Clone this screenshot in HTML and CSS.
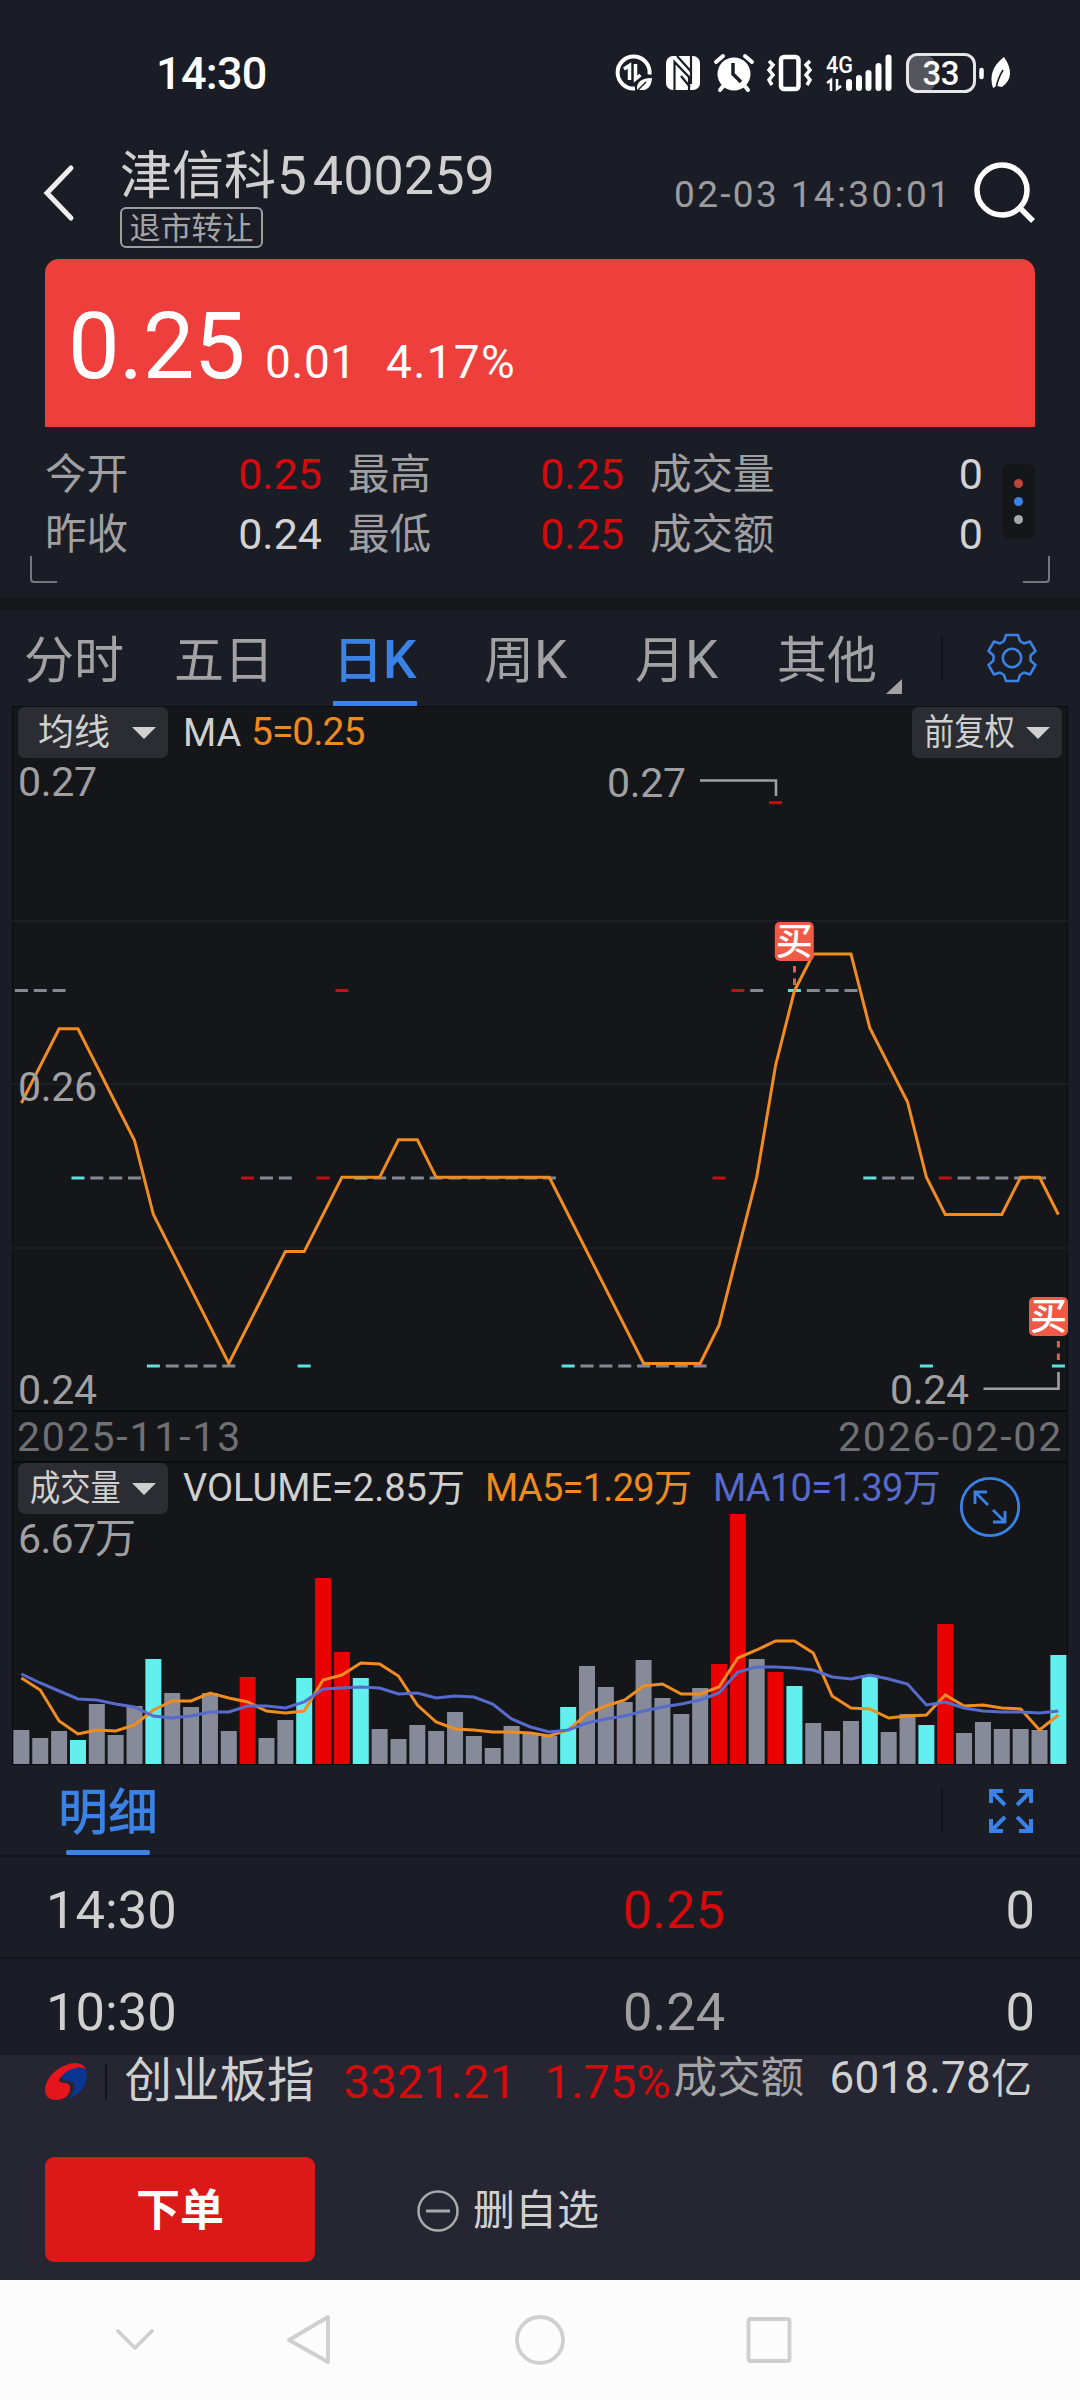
FILE: index.html
```html
<!DOCTYPE html>
<html lang="zh-CN">
<head>
<meta charset="utf-8">
<title>津信科5 400259</title>
<link rel="stylesheet" href="styles.css">
</head>
<body>
<div class="app">
  <div class="status">
    <span class="clock">14:30</span>
    <svg class="status-icons" viewBox="610 45 410 55" width="410" height="55">
      <g fill="none" stroke="#fff" stroke-width="4">
        <path d="M635 88.500A16 16 0 1 1 649.500 74.500"/>
        <path d="M624 69L629.500 65.500V80M635.500 64V79L640.500 75" stroke-width="3.500"/>
      </g>
      <path d="M637 90Q636 78 652 78Q651 91 641 90Z" fill="#fff"/>
      <path d="M637 91L646 82" stroke="#1b1d26" stroke-width="1.500"/>
      <rect x="666" y="56" width="34" height="34" rx="7" fill="#fff"/>
      <path d="M674.500 90V62L689 77V90M677 56L691 71.500M691 84V56M681 76L690 87" fill="none" stroke="#1b1d26" stroke-width="2.200"/>
      <circle cx="734" cy="74" r="16.500" fill="#fff"/>
      <path d="M716 62L723 56M745 56L752 62M720 90L724 85M744 85L748 90" stroke="#fff" stroke-width="4" stroke-linecap="round"/>
      <path d="M733 63V74L741 82" fill="none" stroke="#1b1d26" stroke-width="3.500"/>
      <g fill="none" stroke="#fff">
        <rect x="781" y="57" width="17.500" height="32" rx="3" stroke-width="4.500"/>
        <path d="M769 61L773 65L769 70L773 75L769 80L772 85M810 61L806 65L810 70L806 75L810 80L807 85" stroke-width="3.500"/>
        <path d="M849 82V88M859 78V88M868.500 73V88M878.500 66V88M888.500 57.500V88" stroke-width="6" stroke-linecap="round"/>
        <path d="M827 83L831 80V91M837 79V89L841 86" stroke-width="2.500"/>
      </g>
      <text class="net" x="826" y="73" textLength="27" lengthAdjust="spacingAndGlyphs">4G</text>
      <rect x="909" y="56" width="26" height="35" rx="8" fill="#55565d"/>
      <rect x="907.500" y="54.500" width="67" height="37" rx="10" fill="none" stroke="#e6e6e8" stroke-width="3"/>
      <text class="battery" x="922.500" y="85" textLength="37">33</text>
      <path d="M981.500 70V77" stroke="#fff" stroke-width="4.500" stroke-linecap="round"/>
      <path d="M1004 57Q1017 76 1002 87L997 86L993 88Q987 70 1004 57Z" fill="#fff"/>
      <path d="M996 88Q998 78 1003 70" stroke="#1b1d26" stroke-width="1.600" fill="none"/>
    </svg>
  </div>

  <header class="header">
    <svg class="back" width="34" height="60" viewBox="0 0 34 60"><path d="M29 5L5 30L29 55" fill="none" stroke="#eee" stroke-width="5" stroke-linecap="round"/></svg>
    <div class="names">
      <div class="name"><span class="cn">津信科</span><span class="num">5</span><span class="num code">400259</span></div>
      <span class="badge">退市转让</span>
    </div>
    <span class="time">02-03 14:30:01</span>
    <svg class="search" width="62" height="62" viewBox="0 0 62 62" fill="none" stroke="#fff" stroke-width="5.500"><circle cx="28" cy="28" r="25"/><path d="M46 46L59 59"/></svg>
  </header>

  <section class="price-card"><span class="last">0.25</span><span class="chg">0.01</span><span class="pct">4.17%</span></section>

  <section class="stats">
    <div class="grid">
      <span>今开</span><b class="up">0.25</b><span>最高</span><b class="up">0.25</b><span>成交量</span><b>0</b>
      <span>昨收</span><b>0.24</b><span>最低</span><b class="up">0.25</b><span>成交额</span><b>0</b>
    </div>
    <div class="dots"><i class="d-red"></i><i class="d-blue"></i><i class="d-gray"></i></div>
    <i class="corner left"></i><i class="corner right"></i>
  </section>

  <nav class="tabs">
    <span class="tab t1">分时</span><span class="tab t2">五日</span><span class="tab t3 on">日<em>K</em></span><span class="tab t4">周<em>K</em></span><span class="tab t5">月<em>K</em></span><span class="tab t6">其他</span>
    <svg class="tri" width="16" height="15" viewBox="0 0 16 15"><path d="M16 0V15H0Z" fill="#a2a2a4"/></svg>
    <i class="vline"></i>
    <svg class="gear" width="52" height="52" viewBox="-26 -26 52 52" fill="none" stroke="#3b82e6" stroke-width="2.500" stroke-linejoin="round">
      <path d="M-6 -23H6L8 -17L12 -14.500L18 -16.500L23.500 -7L18.500 -2.500V2.500L23.500 7L18 16.500L12 14.500L8 17L6 23H-6L-8 17L-12 14.500L-18 16.500L-23.500 7L-18.500 2.500V-2.500L-23.500 -7L-18 -16.500L-12 -14.500L-8 -17Z"/><circle r="9.200"/>
    </svg>
  </nav>

  <section class="chart">
    <div class="toolbar">
      <button class="pick">均线<i class="caret"></i></button>
      <span class="ma">MA</span><span class="ma5">5=0.25</span>
      <button class="pick last-pick"><span class="narrow">前复权</span><i class="caret"></i></button>
    </div>
    <svg id="price" class="plot" viewBox="12 757 1056 652" width="1056" height="652">
      <path d="M12 920H1068M12 1083H1068M12 1247H1068" stroke="#212226" stroke-width="1.500"/>
    </svg>
    <div class="dates"><span>2025-11-13</span><span class="to">2026-02-02</span></div>
    <div class="toolbar vol-bar">
      <button class="pick"><span class="narrow">成交量</span><i class="caret"></i></button>
      <span class="v0">VOLUME=2.85万</span><span class="v1">MA5=1.29万</span><span class="v2">MA10=1.39万</span>
    </div>
    <svg id="volume" class="plot" viewBox="12 1514 1056 249" width="1056" height="249"></svg>
    <svg class="expand" width="62" height="62" viewBox="-31 -31 62 62" fill="none" stroke="#3b82e6" stroke-width="2.800"><circle r="28.700"/><path d="M-2 -2L-15 -15M-15 -3V-15H-3M3 3L15 15M15 4V15H3"/></svg>
  </section>

  <section class="detail">
    <div class="detail-head">
      <span class="detail-tab">明细</span>
      <i class="vline"></i>
      <svg class="full" width="44" height="44" viewBox="0 0 44 44" fill="none" stroke="#3b82e6" stroke-width="4"><path d="M16 16L3 3M2 14V2H14M28 16L41 3M42 14V2H30M16 28L3 41M2 30V42H14M28 28L41 41M42 30V42H30"/></svg>
    </div>
    <div class="row"><span>14:30</span><span class="p up2">0.25</span><span class="q">0</span></div>
    <div class="row"><span>10:30</span><span class="p flat">0.24</span><span class="q">0</span></div>
  </section>

  <footer class="bottom">
    <div class="index">
      <svg class="logo" width="42" height="40" viewBox="0 0 42 40"><path d="M0 27C1 13 15 1 30 0C36 0 40 3 41 7C38 4 33 4 29 6C22 8 14 14 14 18C15 21 24 18 25 24C26 31 20 37 11 37C4 37 0 33 0 27Z" fill="#e6141c"/><path d="M41 7C44 20 36 32 23 36C28 32 31 25 29 20C27 17 17 19 17 14C19 8 34 1 41 7Z" fill="#0a3595"/></svg>
      <i class="vline"></i>
      <span class="iname">创业板指</span><span class="ival">3321.21</span><span class="ipct">1.75%</span><span class="ilab">成交额</span><span class="iamt">6018.78<span class="yi">亿</span></span>
    </div>
    <div class="actions">
      <button class="order">下单</button>
      <svg class="minus" width="42" height="42" viewBox="-21 -21 42 42" fill="none" stroke="#aaaaad" stroke-width="2.500"><circle r="19.500"/><path d="M-12 0H12" stroke-width="3"/></svg>
      <span class="remove">删自选</span>
    </div>
  </footer>

  <div class="sysnav">
    <svg width="1080" height="120" viewBox="0 2280 1080 120" fill="none" stroke="#cfcfcf" stroke-width="3.800" stroke-linejoin="round" stroke-linecap="round">
      <path d="M118 2331L135 2348L152 2331"/><path d="M328 2317V2362L289 2340Z"/><circle cx="540" cy="2340" r="23"/><rect x="748.500" y="2319" width="41" height="42" rx="2"/>
    </svg>
  </div>
</div>
<script src="chart.js"></script>
</body>
</html>
```
FILE: styles.css
```css
* { box-sizing: border-box; }
body { margin: 0; background: #1b1d26; font-family: Roboto, "Noto Sans CJK SC", sans-serif; color: #d0d0d0; }
.app { width: 1080px; height: 2400px; display: flex; flex-direction: column; overflow: hidden; line-height: 1; }
button { border: 0; padding: 0; font: inherit; color: inherit; line-height: 1; }
i, b, em { font-style: normal; font-weight: 400; display: inline-block; }
svg { display: block; flex: none; overflow: visible; }
span { white-space: nowrap; }

.status { height: 140px; padding: 45px 60px 0 156px; display: flex; justify-content: space-between; align-items: flex-start; color: #fff; }
.clock { font-size: 45px; font-weight: 500; line-height: 58px; letter-spacing: -0.700px; }
.net { font: 500 24px Roboto, sans-serif; fill: #fff; }
.battery { font: 500 33px Roboto, sans-serif; fill: #fff; }

.header { height: 119px; display: flex; align-items: flex-start; }
.back { margin: 23px 0 0 42px; }
.names { width: 554px; margin-left: 44px; }
.name { height: 67px; display: flex; align-items: baseline; line-height: 71px; }
.cn { font-size: 52px; }
.num { font-size: 53px; margin-left: 1px; }
.code { margin-left: 6px; font-size: 54px; }
.badge { display: flex; align-items: center; justify-content: center; width: 143px; height: 41px; border: 2px solid #9d9da1; border-radius: 6px; font-size: 31px; color: #a4a4a7; padding-top: 1px; }
.time { font-size: 37px; letter-spacing: 2.350px; margin-top: 36px; color: #9c9c9f; width: 300px; }
.search { margin-top: 22px; }

.price-card { height: 168px; margin: 0 45px; background: #ef3f3d; border-radius: 14px 14px 0 0; color: #fff; display: flex; align-items: baseline; padding: 42px 0 0 23px; }
.last { font-size: 92px; width: 197px; letter-spacing: -0.600px; }
.chg { font-size: 46px; width: 121px; letter-spacing: .500px; }
.pct { font-size: 46px; letter-spacing: 1.300px; }

.stats { position: relative; height: 183px; padding: 18px 45px 0; display: flex; border-bottom: 12px solid #16171a; }
.grid { display: grid; width: 938px; grid-template-columns: 120px 183px 120px 182px 140px 193px; grid-auto-rows: 60px; font-size: 41.500px; line-height: 60px; color: #a0a0a3; }
.grid b { font-size: 43px; line-height: 58px; text-align: right; color: #d3d3d4; padding-right: 26px; }
.grid b:nth-child(6n) { padding-right: 0; }
.grid .up { color: #d60a0d; }
.dots { margin: 19px 0 0 19px; width: 33px; height: 75px; border-radius: 8px; background: #15161a; display: flex; flex-direction: column; align-items: center; justify-content: center; gap: 9px; }
.dots i { width: 9px; height: 9px; border-radius: 50%; }
.d-red { background: #c04439; } .d-blue { background: #3b82e6; } .d-gray { background: #a8a8aa; }
.corner { position: absolute; top: 129px; width: 27px; height: 27px; border-bottom: 2.500px solid #77787d; }
.left { left: 30px; border-left: 2.500px solid #77787d; border-radius: 0 0 0 4px; }
.right { right: 30px; border-right: 2.500px solid #77787d; border-radius: 0 0 4px 0; }

.tabs { height: 96px; display: flex; align-items: flex-start; padding-left: 24px; font-size: 50px; color: #a2a2a4; }
.tab { height: 96px; line-height: 102px; }
.tab em { font-size: 53px; line-height: 50px; }
.t1 { width: 150px; } .t2 { width: 159px; } .t3 { width: 84px; } .t4 { margin-left: 67px; width: 151px; } .t5 { width: 142px; } .t6 { width: 111px; }
.on { color: #3b82e6; font-weight: 500; border-bottom: 5px solid #3b82e6; }
.tri { margin: 69px 0 0 -2px; }
.on em { font-weight: 500; }
.vline { width: 1.500px; height: 45px; background: #121318; }
.tabs .vline { margin: 26px 0 0 39px; }
.gear { margin: 22px 0 0 43px; }

.chart { position: relative; height: 1059px; margin: 0 12px; background: #15161a; border: 1px solid #0b0c10; border-width: 1px 1px 2px; }
.toolbar { height: 51px; display: flex; align-items: center; padding: 0 5px; font-size: 39px; }
.pick { width: 150px; height: 51px; border-radius: 7px; background: #2c2d32; font-size: 36px; display: flex; align-items: center; justify-content: space-between; padding: 0 12px 0 20px; }
.vol-bar .pick, .last-pick { padding-left: 12px; }
.narrow { width: 92px; transform: scaleX(.84); transform-origin: left; }
.caret { border: 12px solid transparent; border-top-color: #d0d0d0; border-bottom: 0; }
.ma { font-size: 38px; margin-left: 15px; width: 68px; }
.ma5 { color: #ef8a1e; font-size: 39px; letter-spacing: -1px; }
.last-pick { margin-left: auto; }
.plot { margin-left: -1px; }
.lbl { font: 41px Roboto, sans-serif; fill: #a0a0a2; }
.wan { font-family: "Noto Sans CJK SC", sans-serif; }
.buy { font: 500 37px "Noto Sans CJK SC", sans-serif; fill: #fff; }
.dates { height: 53px; border: solid #0b0c10; border-width: 2px 0; display: flex; justify-content: space-between; font-size: 41px; line-height: 51px; padding: 0 4px; letter-spacing: 1.800px; color: #707073; }
.v0, .v1, .v2 { font-size: 38px; position: relative; top: -1px; }
.v0 { width: 302px; margin-left: 15px; } .v1 { width: 228px; color: #ef8a1e; letter-spacing: -0.700px; } .v2 { color: #566bcb; letter-spacing: -0.700px; }
.expand { position: absolute; left: 946px; top: 769px; }

.detail-head { height: 92px; display: flex; align-items: flex-start; padding-left: 58px; border-bottom: 2px solid #14151b; }
.detail-tab { font-size: 50px; font-weight: 500; color: #3b82e6; line-height: 97px; height: 91px; position: relative; width: 883px; }
.detail-tab::after { content: ""; position: absolute; left: 8px; bottom: 1px; width: 84px; height: 5px; background: #3b82e6; border-radius: 2px; }
.detail-head .vline { margin-top: 23px; }
.full { margin: 24px 0 0 46px; }
.row { height: 102px; padding: 0 45px 0 46px; display: grid; grid-template-columns: 577px 1fr auto; font-size: 52.500px; line-height: 106px; border-bottom: 2px solid #14151b; }
.row:last-child { height: 96px; border: 0; }
.up2 { color: #d60a0d; } .flat { color: #a0a0a2; }

.bottom { height: 225px; background: #252631; }
.index { height: 60px; display: flex; align-items: flex-start; padding-left: 45px; line-height: 50px; }
.logo { margin-top: 8px; }
.index .vline { height: 36px; margin: 9px 0 0 18px; background: #14151b; }
.iname { font-size: 47.500px; margin: 0 0 0 18px; width: 219px; line-height: 52px; }
.ival, .ipct { font-size: 47px; color: #d60a0d; line-height: 54px; }
.ival { width: 201px; letter-spacing: .300px; } .ipct { width: 129px; }
.ilab { font-size: 43.500px; width: 156px; color: #a4a4a7; line-height: 47px; }
.iamt { font-size: 44px; line-height: 47px; letter-spacing: .200px; }
.yi { font-size: 41px; }
.actions { display: flex; padding: 42px 45px 0; align-items: center; }
.order { width: 270px; height: 105px; border-radius: 9px; background: #dc1919; color: #fff; font-size: 44px; font-weight: 700; padding-top: 2px; }
.minus { margin: 2px 0 0 102px; }
.remove { font-size: 42px; margin: 3px 0 0 14px; }
.sysnav { height: 120px; background: #fcfcfc; }
```
FILE: chart.js
```js
const X0 = 21.4, STEP = 18.854;
const COLORS = { g: '#878a98', c: '#62f0ef', r: '#ea0000' };
const DASH = { g: '#848994', c: '#62dfe0', r: '#c31013' };
const days = 'gggcgggcggggrggcrrcggggggggggcgggggggrrgrcgggcggcrgggggc';

const heights = [34, 26, 33, 24, 60, 29, 58, 105, 71, 57, 71, 33, 87, 26, 44, 86, 186, 112, 86, 35, 25, 39, 33, 52, 28, 16, 38, 30,
  28, 57, 98, 77, 62, 104, 66, 50, 76, 100, 250, 105, 92, 78, 41, 33, 43, 89, 32, 50, 39, 140, 31, 42, 35, 35, 34, 109];
const ma5 = [86, 74, 43, 30, 34, 33, 39, 54, 63, 63, 71, 66, 62, 53, 51, 53, 84, 89, 101, 100, 88, 59, 42, 35, 34, 32, 32, 31,
  28, 34, 50, 58, 64, 78, 80, 70, 70, 77, 106, 114, 123, 123, 111, 68, 56, 55, 46, 48, 49, 69, 58, 59, 56, 55, 34, 49];
const ma10 = [90, 81, 73, 65, 64, 60, 57, 48, 46, 48, 52, 52, 58, 58, 56, 62, 75, 76, 77, 76, 70, 71, 66, 68, 67, 60, 45, 37,
  32, 34, 41, 45, 48, 53, 57, 60, 64, 71, 92, 97, 97, 96, 94, 87, 85, 89, 85, 80, 59, 62, 56, 53, 52, 52, 51, 53];

// Flat daily candles: [first day, last day, y]
const closes = [[0, 2, 989.5], [3, 6, 1177], [7, 11, 1365], [12, 14, 1177], [15, 15, 1365], [16, 16, 1177], [17, 17, 989.5],
  [18, 28, 1177], [29, 36, 1365], [37, 37, 1177], [38, 39, 989.5], [40, 40, 801.7], [41, 44, 989.5], [45, 47, 1177],
  [48, 48, 1365], [49, 54, 1177], [55, 55, 1365]];
const priceMa = [[0, 1102], [2, 1027.8], [3, 1027.8], [6, 1139.5], [7, 1213.5], [11, 1362.5], [14, 1250.6], [15, 1250.6],
  [17, 1176.3], [19, 1176.3], [20, 1138.8], [21, 1138.8], [22, 1176.3], [28, 1176.3], [33, 1362.5], [36, 1362.5],
  [37, 1324.5], [39, 1176.3], [40, 1064.5], [41, 989.8], [42, 953], [44, 953], [45, 1027], [47, 1101], [48, 1176.3],
  [49, 1213.5], [52, 1213.5], [53, 1176.3], [54, 1176.3], [55, 1213.5]];

const x = i => X0 + i * STEP;
const line = (pts, color, w) =>
  `<polyline points="${pts.map(([i, y]) => x(i) + ',' + y).join(' ')}" fill="none" stroke="${color}" stroke-width="${w}"/>`;
const label = (lx, y, s) => `<text class="lbl" x="${lx}" y="${y}" textLength="79">${s}</text>`;
const buy = (bx, y, sx) =>
  `<path d="M${sx} ${y + 44}v6.500m0 6v6.500" stroke="#d9604f" stroke-width="3"/>
   <rect x="${bx}" y="${y}" width="39" height="39" rx="5" fill="#ee5a45"/><text class="buy" x="${bx + 1}" y="${y + 33}">买</text>`;

let price = '';
for (const [a, b, y] of closes)
  for (let i = a; i <= b; i++)
    price += `<rect x="${x(i) - 6.5}" y="${y - 1.5}" width="13" height="3" fill="${DASH[days[i]]}"/>`;
price += line(priceMa, '#f08c20', 3);
price += label(18, 795, '0.27') + label(18, 1100, '0.26') + label(18, 1403, '0.24');
price += label(607, 796, '0.27') + label(890, 1403, '0.24');
price += '<path d="M700 779.500H776V795M983.500 1387.700H1058.500V1371" fill="none" stroke="#a0a0a2" stroke-width="2.600"/>';
price += buy(774.8, 921, 794.5) + buy(1029, 1296, 1058.4);
document.getElementById('price').innerHTML += price;

const BASE = 1764;
let vol = '<text class="lbl" x="18" y="1553" textLength="78">6.67</text><text class="lbl wan" x="95" y="1553">万</text>';
heights.forEach((h, i) => {
  vol += `<rect x="${x(i) - 8}" y="${BASE - h}" width="16" height="${h}" fill="${COLORS[days[i]]}"/>`;
});
vol += line(ma5.map((v, i) => [i, BASE - v]), '#f08c20', 3) + line(ma10.map((v, i) => [i, BASE - v]), '#566bcb', 3);
document.getElementById('volume').innerHTML = vol;
```
